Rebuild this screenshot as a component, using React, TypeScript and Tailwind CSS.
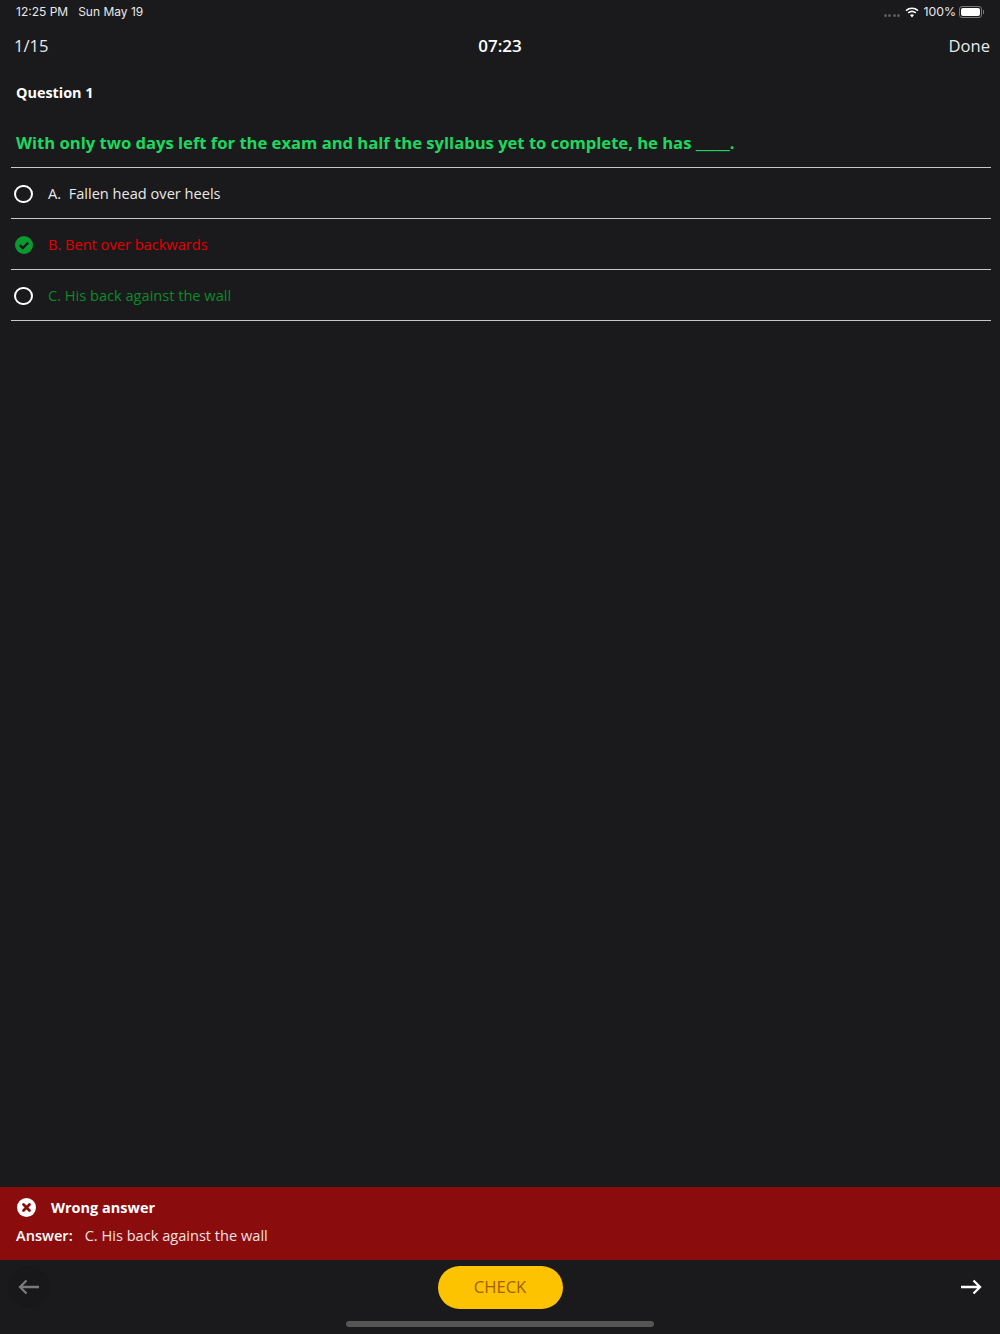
import React from 'react';

const options = [
  { label: 'A.  Fallen head over heels', color: 'text-[#e8e8e8]', checked: false },
  { label: 'B. Bent over backwards', color: 'text-[#e00000]', checked: true },
  { label: 'C. His back against the wall', color: 'text-[#0b8a2a]', checked: false },
];

function CheckedIcon() {
  return (
    <svg width="18" height="18" viewBox="0 0 18 18">
      <circle cx="9" cy="9" r="9" fill="#0a9a30" />
      <path d="M4.8 9.2 L7.8 12 L13.2 6.6" fill="none" stroke="#1a1a1c" strokeWidth="2.4" />
    </svg>
  );
}

function WrongIcon() {
  return (
    <svg width="19" height="19" viewBox="0 0 19 19">
      <circle cx="9.5" cy="9.5" r="9.5" fill="#ffffff" />
      <path d="M6.5 6.5 L12.5 12.5 M12.5 6.5 L6.5 12.5" fill="none" stroke="#8b0c0d" strokeWidth="2.8" strokeLinecap="round" />
    </svg>
  );
}

function WifiIcon() {
  return (
    <svg width="14" height="11" viewBox="0 0 14 11">
      <path d="M1 3.6 A9 9 0 0 1 13 3.6" fill="none" stroke="#ffffff" strokeWidth="1.6" />
      <path d="M3.2 5.9 A6 6 0 0 1 10.8 5.9" fill="none" stroke="#ffffff" strokeWidth="1.6" />
      <path d="M5 8.1 A3.2 3.2 0 0 1 9 8.1 L7 10.4 Z" fill="#ffffff" />
    </svg>
  );
}

function NavArrow({ color, flip }: { color: string; flip?: boolean }) {
  return (
    <svg width="22" height="16" viewBox="0 0 22 16" className={flip ? '-scale-x-100' : ''}>
      <path d="M1 8 H20 M13.5 1.5 L20 8 L13.5 14.5" fill="none" stroke={color} strokeWidth="2.3" />
    </svg>
  );
}

export default function App() {
  return (
    <div className="flex flex-col w-[1000px] h-[1334px] bg-[#1a1a1c] font-['Open_Sans',sans-serif] overflow-hidden">
      {/* Status bar */}
      <div className="flex items-center justify-between h-[24px] pl-4 pr-[16px] font-['Inter',sans-serif] text-[12px] text-[#e8e8e8]">
        <div className="flex gap-[10px]">
          <span>12:25 PM</span>
          <span>Sun May 19</span>
        </div>
        <div className="flex items-center">
          <div className="flex gap-[1.5px] mt-[7px] mr-[5px]">
            {[0, 1, 2, 3].map((i) => (
              <div key={i} className="w-[3px] h-[3px] rounded-full bg-[#5a5a5a]" />
            ))}
          </div>
          <WifiIcon />
          <span className="ml-[4px] text-[12.3px]">100%</span>
          <div className="flex items-center ml-[3px]">
            <div className="w-[23px] h-[12px] rounded-[3px] border border-[#777] p-[1px]">
              <div className="w-full h-full rounded-[2px] bg-white" />
            </div>
            <div className="w-[1px] h-[4px] ml-[1px] bg-[#777]" />
          </div>
        </div>
      </div>

      {/* Nav */}
      <div className="relative flex items-center justify-between h-[44px] pl-[14px] pr-[10px] text-[16.6px] text-[#e8e8e8]">
        <span>1/15</span>
        <span className="absolute left-0 right-0 text-center text-[17px] text-white font-semibold">07:23</span>
        <span>Done</span>
      </div>

      <div className="pl-4 mt-[15px] text-[14.4px] leading-[20px] font-bold text-white">Question 1</div>

      <div className="pl-4 mt-[28px] h-[36px] text-[16.6px] leading-[24px] font-bold text-[#1ed760] whitespace-nowrap">
        With only two days left for the exam and half the syllabus yet to complete, he has _____.
      </div>

      {/* Options */}
      <div className="ml-[11px] mr-[9px] border-t border-[#c8c8c8]">
        {options.map((o) => (
          <div key={o.label} className="flex items-center h-[51px] pt-[2px] border-b border-[#c8c8c8]">
            <div className="flex items-center justify-center w-[18px] h-[18px] ml-[3.5px]">
              {o.checked ? (
                <CheckedIcon />
              ) : (
                <div className="w-[18.5px] h-[18.5px] shrink-0 rounded-full border-2 border-white" />
              )}
            </div>
            <span className={`ml-[15.5px] text-[14.6px] whitespace-pre ${o.color}`}>{o.label}</span>
          </div>
        ))}
      </div>

      <div className="flex-1" />

      {/* Result banner */}
      <div className="h-[73px] bg-[#8b0c0d] pl-4 text-white">
        <div className="flex items-center h-[40px] pl-[1px]">
          <WrongIcon />
          <span className="ml-[15px] pt-[1px] text-[14.5px] font-bold">Wrong answer</span>
        </div>
        <div className="flex text-[14.6px] leading-[16px]">
          <span className="font-semibold">Answer:</span>
          <span className="ml-[12px] text-[#f0e0e0]">C. His back against the wall</span>
        </div>
      </div>

      {/* Footer */}
      <div className="relative h-[74px]">
        <div className="flex items-center justify-between h-[54px] px-[8px]">
          <div className="flex items-center justify-center w-[42px] h-[42px] rounded-full bg-[#18181a]">
            <NavArrow color="#7a7a7a" flip />
          </div>
          <div className="flex items-center justify-center w-[125px] h-[43px] pt-[1px] rounded-full bg-[#fdc200] text-[16.6px] font-medium text-[#a06000]">
            CHECK
          </div>
          <div className="flex items-center justify-center w-[42px] h-[42px]">
            <NavArrow color="#ffffff" />
          </div>
        </div>
        <div className="w-[308px] h-[6px] mx-auto mt-[7px] rounded-full bg-[#555]" />
      </div>
    </div>
  );
}
